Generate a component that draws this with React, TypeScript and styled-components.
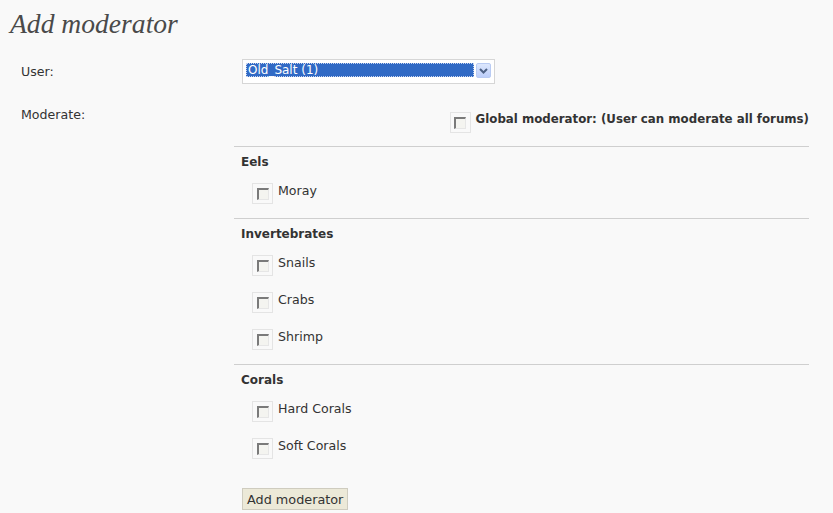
import React from 'react';
import styled, { createGlobalStyle } from 'styled-components';

const GlobalStyle = createGlobalStyle`
  html, body {
    margin: 0;
    padding: 0;
    background: #f9f9f9;
  }
  body {
    font-family: "DejaVu Sans", Verdana, sans-serif;
    font-size: 12px;
    color: #333;
  }
`;

const forums = [
  { id: 'eels', name: 'Eels', items: ['Moray'] },
  { id: 'inverts', name: 'Invertebrates', items: ['Snails', 'Crabs', 'Shrimp'] },
  { id: 'corals', name: 'Corals', items: ['Hard Corals', 'Soft Corals'] },
];

const Check = () => (
  <CheckFrame>
    <CheckBox />
  </CheckFrame>
);

const App = () => {
  return (
    <Page>
      <GlobalStyle />
      <Title>Add moderator</Title>
      <Form>
        <Row>
          <Label>User:</Label>
          <Field>
            <Select>
              <Selected>Old_Salt (1)</Selected>
              <ArrowButton>
                <svg width="9" height="6" viewBox="0 0 9 6">
                  <path d="M1 1 L4.5 4.5 L8 1" fill="none" stroke="#4d6185" strokeWidth="2" />
                </svg>
              </ArrowButton>
            </Select>
          </Field>
        </Row>
        <Row $top={22}>
          <Label $pad={1}>Moderate:</Label>
          <Field>
            <GlobalRow>
              <Check />
              <GlobalText>Global moderator: (User can moderate all forums)</GlobalText>
            </GlobalRow>
            {forums.map((f) => (
              <Section key={f.id}>
                <Heading>{f.name}</Heading>
                <Items>
                  {f.items.map((item) => (
                    <Item key={item}>
                      <Check />
                      <ItemText>{item}</ItemText>
                    </Item>
                  ))}
                </Items>
              </Section>
            ))}
            <Submit>Add moderator</Submit>
          </Field>
        </Row>
      </Form>
    </Page>
  );
};

export default App;

const Page = styled.div`
  padding: 8px 0 0 10px;
`;

const Title = styled.h1`
  margin: 0;
  font-family: "Liberation Serif", Georgia, serif;
  font-style: italic;
  font-weight: normal;
  font-size: 27.6px;
  line-height: 32px;
  color: #4a4a4a;
`;

const Form = styled.div`
  margin-top: 19px;
  padding-left: 11px;
`;

const Row = styled.div<{ $top?: number }>`
  display: grid;
  grid-template-columns: 213px 575px;
  margin-top: ${(p) => p.$top ?? 0}px;
`;

const Label = styled.div<{ $pad?: number }>`
  font-size: 12.6px;
  line-height: 15px;
  padding-top: ${(p) => p.$pad ?? 5}px;
`;

const Field = styled.div`
  display: flex;
  flex-direction: column;
`;

const Select = styled.div`
  margin-left: 8px;
  width: 245px;
  height: 17px;
  padding: 3px;
  border: 1px solid #d6d6d6;
  background: #fff;
  display: flex;
  align-items: flex-start;
  gap: 2px;
`;

const Selected = styled.div`
  flex: 1;
  height: 14px;
  box-sizing: border-box;
  background: #316ac5;
  border: 1px dotted #c8d4ee;
  color: #fff;
  line-height: 12px;
  padding-left: 1px;
`;

const ArrowButton = styled.div`
  width: 15px;
  height: 15px;
  box-sizing: border-box;
  border: 1px solid #b9cbf3;
  border-radius: 2px;
  background: linear-gradient(#dde7fd, #bccefa);
  display: flex;
  align-items: center;
  justify-content: center;
`;

const CheckFrame = styled.span`
  width: 21px;
  height: 21px;
  box-sizing: border-box;
  border: 1px solid #e4e4e4;
  display: flex;
  align-items: center;
  justify-content: center;
  flex-shrink: 0;
`;

const CheckBox = styled.span`
  width: 12px;
  height: 12px;
  box-sizing: border-box;
  border-top: 2px solid #7a7a7a;
  border-left: 2px solid #7a7a7a;
  border-right: 1px solid #e6e6e6;
  border-bottom: 1px solid #e6e6e6;
  background: #f4f4f0;
`;

const GlobalRow = styled.div`
  display: flex;
  justify-content: flex-end;
  gap: 5px;
  padding-top: 6px;
  padding-bottom: 13px;
`;

const GlobalText = styled.span`
  font-weight: bold;
  font-size: 11.8px;
  line-height: 15px;
`;

const Section = styled.div`
  border-top: 1px solid #cfcfcf;
  padding: 8px 0 14px 7px;
`;

const Heading = styled.div`
  font-weight: bold;
  line-height: 15px;
`;

const Items = styled.div`
  display: flex;
  flex-direction: column;
  gap: 16px;
  margin-top: 13px;
  padding-left: 11px;
`;

const Item = styled.div`
  display: flex;
  gap: 5px;
`;

const ItemText = styled.span`
  font-size: 12.6px;
  line-height: 15px;
`;

const Submit = styled.button`
  align-self: flex-start;
  margin: 15px 0 0 8px;
  height: 22px;
  padding: 0 4px;
  border: 1px solid #cfccbf;
  background: #ece9d8;
  font-family: "DejaVu Sans", Verdana, sans-serif;
  font-size: 12.8px;
  color: #333;
`;
